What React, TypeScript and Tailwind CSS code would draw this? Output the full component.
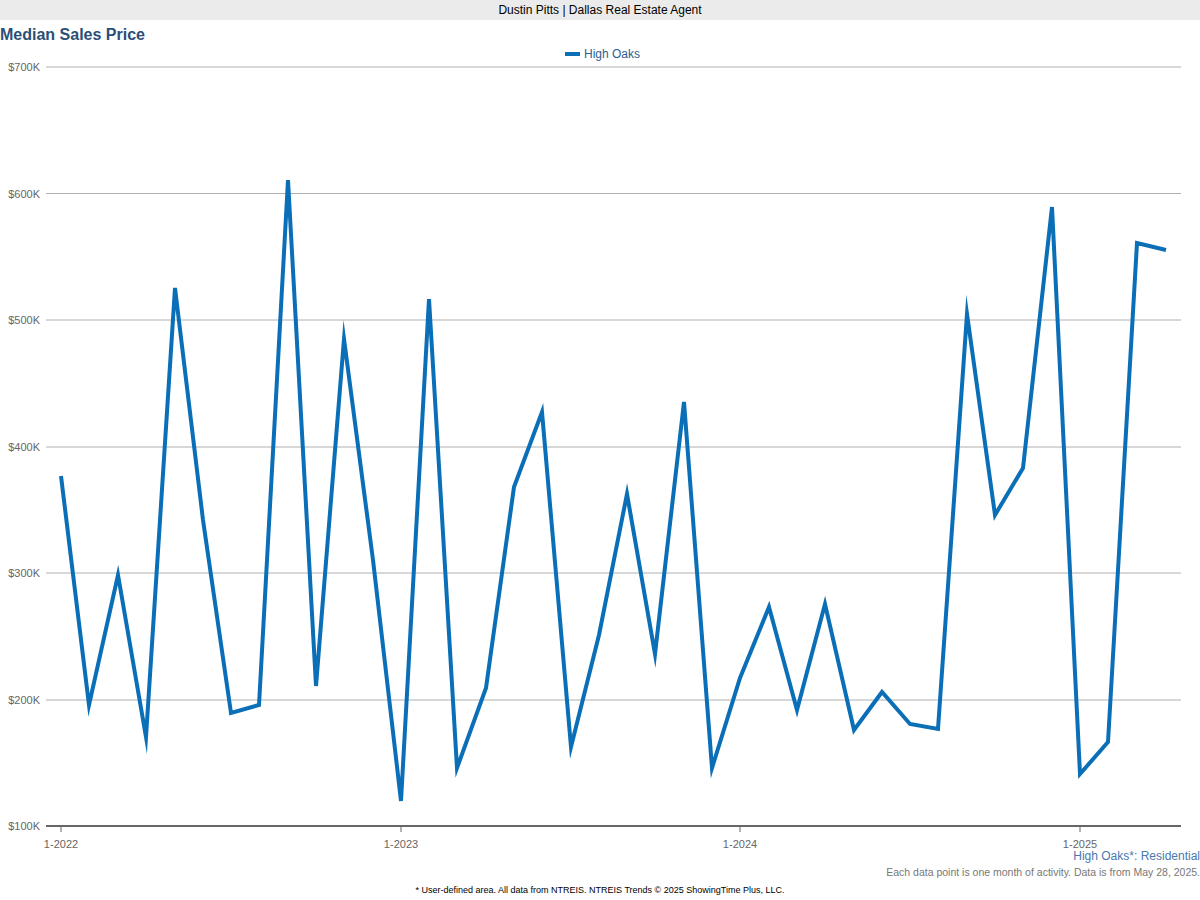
const pts: [number, number][] = [
  [61,476],[89,705],[118,575],[146,737],[175,288],[203,520],[231,713],[259,705],[288,180],[316,686],
  [344,339],[373,560],[401,801],[429,299],[457,768],[486,688],[514,487],[542,412],[571,747],[599,635],
  [627,494],[655,654],[684,402],[712,768],[740,678],[769,607],[797,710],[825,604],[854,730],[882,692],
  [910,724],[938,729],[967,314],[995,515],[1023,468],[1052,207],[1080,774],[1108,742],[1137,243],[1166,250],
];
const OFF = 44;
const grid = [
  ["$700K", 67],["$600K", 193.5],["$500K", 320],["$400K", 447],["$300K", 573],["$200K", 700],
] as const;
const xs = [["1-2022",61],["1-2023",401],["1-2024",740],["1-2025",1080]] as const;

export default function App() {
  const font = { fontFamily: '"Liberation Sans", Arial, sans-serif' };
  return (
    <div className="w-[1200px] h-[900px] bg-white relative overflow-hidden" style={font}>
      <div className="h-[20px] bg-[#ebebeb] flex items-center justify-center text-[12px] text-black">
        Dustin Pitts | Dallas Real Estate Agent
      </div>
      <div className="h-[24px] flex items-center text-[16px] font-bold text-[#2b4f76] pl-0 pt-[6px]">
        Median Sales Price
      </div>
      <svg width="1200" height="806" className="block" style={font}>
        <line x1="565" x2="580" y1={54-OFF} y2={54-OFF} stroke="#0b6fb8" strokeWidth="4" />
        <text x="584" y={58-OFF} fontSize="12" fill="#2b5e92">High Oaks</text>
        {grid.map(([l, y]) => (
          <g key={l}>
            <line x1="46" x2="1181" y1={y-OFF} y2={y-OFF} stroke="#b0b0b0" strokeWidth="1" />
            <text x="40" y={y-OFF+4} fontSize="11" fill="#666" textAnchor="end">{l}</text>
          </g>
        ))}
        <line x1="46" x2="1181" y1={826-OFF} y2={826-OFF} stroke="#666" strokeWidth="2" />
        <text x="40" y={826-OFF+4} fontSize="11" fill="#666" textAnchor="end">$100K</text>
        {xs.map(([l, x]) => (
          <g key={l}>
            <line x1={x} x2={x} y1={826-OFF} y2={832-OFF} stroke="#666" strokeWidth="1" />
            <text x={x} y={848-OFF} fontSize="11" fill="#666" textAnchor="middle">{l}</text>
          </g>
        ))}
        <polyline
          points={pts.map(([x, y]) => `${x},${y-OFF}`).join(" ")}
          fill="none" stroke="#0b6fb8" strokeWidth="4" strokeLinejoin="miter" strokeMiterlimit="10"
        />
      </svg>
      <div className="text-right text-[12px] text-[#4a78ad] leading-[14px] mt-[-1px]">High Oaks*: Residential</div>
      <div className="text-right text-[10.5px] text-[#777] leading-[14px] mt-[2px]">Each data point is one month of activity. Data is from May 28, 2025.</div>
      <div className="text-center text-[9px] text-black leading-[12px] mt-[5px]">* User-defined area. All data from NTREIS. NTREIS Trends © 2025 ShowingTime Plus, LLC.</div>
    </div>
  );
}
